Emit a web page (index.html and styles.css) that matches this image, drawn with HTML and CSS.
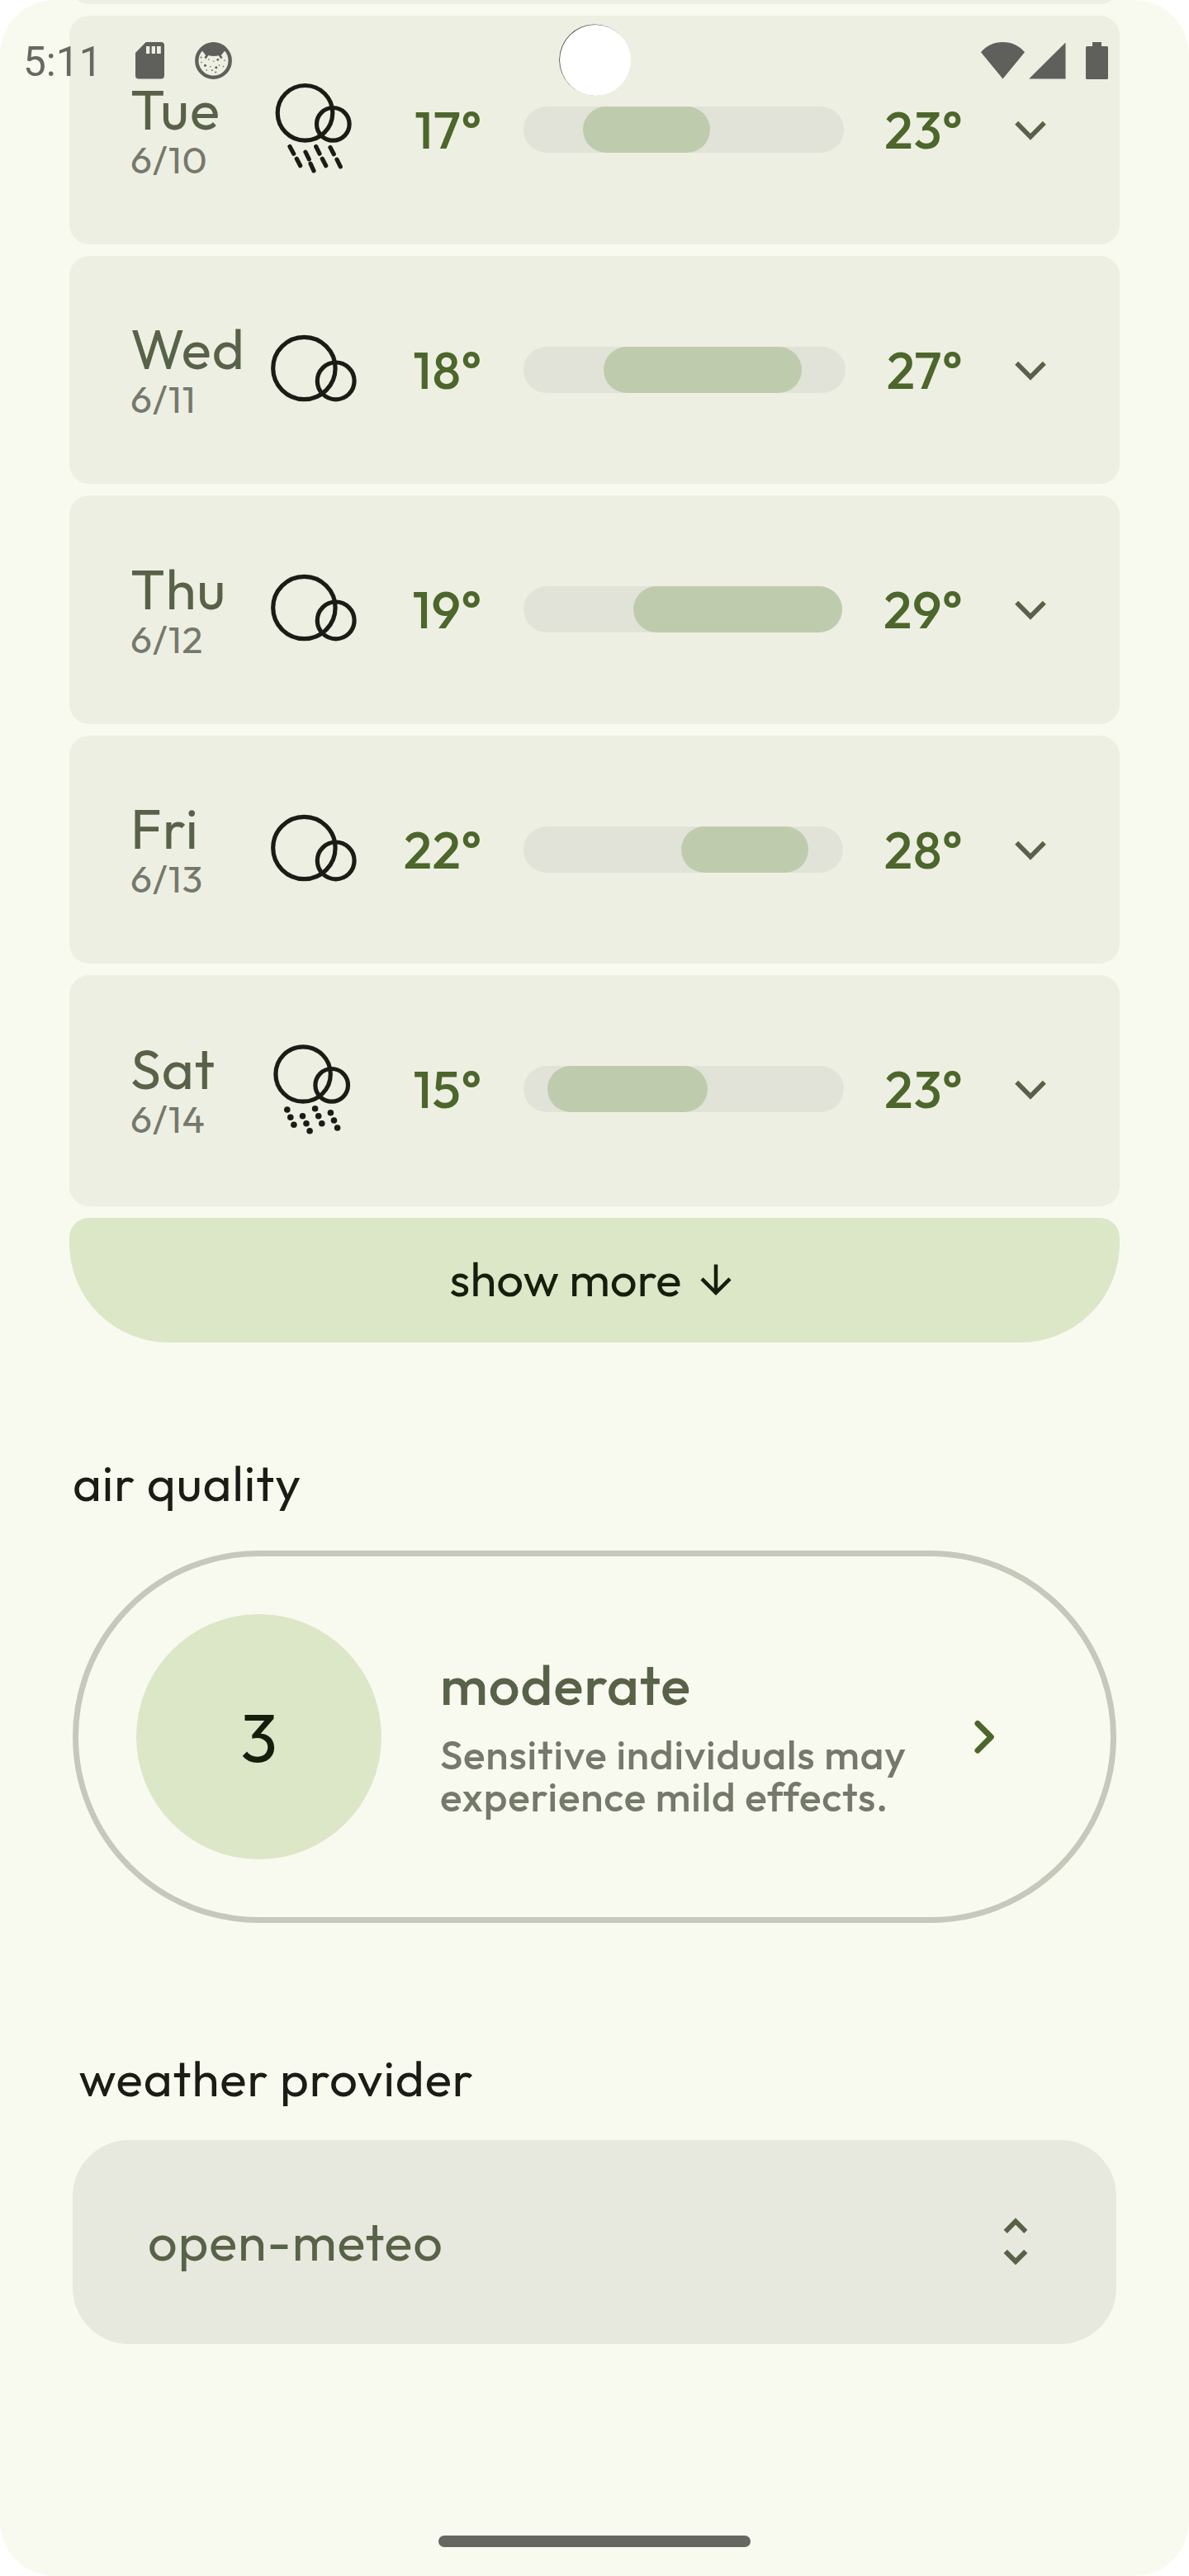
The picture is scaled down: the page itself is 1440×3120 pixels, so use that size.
FILE: index.html
```
<!DOCTYPE html>
<html lang="en">
<head>
<meta charset="utf-8">
<title>Weather</title>
<link rel="stylesheet" href="styles.css">
</head>
<body>
<div class="screen">
  <header class="status-bar">
    <div class="status-left">
      <span class="clock">5:11</span>
      <svg class="icon-sd" width="35" height="45" viewBox="0 0 35 45"><path fill-rule="evenodd" d="M12.700 0H31a4 4 0 0 1 4 4v36.500a4 4 0 0 1-4 4H4a4 4 0 0 1-4-4V13zM13 5v9h4.300V5zM19.700 5v9H24V5zM26 5v9h4.800V5z"/></svg>
      <svg class="icon-cat" width="45" height="45" viewBox="0 0 45 45">
        <circle cx="22.500" cy="22.500" r="20.200" fill="none" stroke="currentColor" stroke-width="4.400"/>
        <path d="M8.500 10C12 4.500 17 2 22.500 2S33 4.500 36.500 10L33 14.500Q28 17 22.500 17T12 14.500z"/>
        <path d="M13 13.500l1.800 2.500-2.300 3.500M32 13.500L30.200 16l2.300 3.500" fill="none" stroke="currentColor" stroke-width="2.600"/>
        <g><circle cx="12.500" cy="28.200" r="1.500"/><circle cx="27.800" cy="21.300" r="1.400"/><circle cx="25.800" cy="30.800" r="1.500"/><circle cx="7.500" cy="18.500" r=".9"/><circle cx="16.800" cy="21" r=".8"/><circle cx="8" cy="24.500" r=".8"/><circle cx="18.700" cy="29.800" r=".8"/><circle cx="22.800" cy="23.300" r=".7"/><circle cx="29.500" cy="28" r=".8"/><circle cx="34.500" cy="29.500" r=".8"/><circle cx="14.200" cy="34" r=".8"/><circle cx="20.800" cy="34.200" r=".9"/><circle cx="25.200" cy="36.500" r=".9"/><circle cx="36" cy="22.300" r=".8"/></g>
      </svg>
    </div>
    <div class="camera"></div>
    <div class="status-right">
      <svg class="icon-wifi" width="53" height="45" viewBox="0 0 53 45"><path d="M0 12.200C6.500 4.500 15.500 0 26.500 0S46.500 4.500 53 12.200L26.500 44.500z"/></svg>
      <svg class="icon-signal" width="45" height="45" viewBox="0 0 45 45"><path d="M44.500.5v44H.2z"/></svg>
      <svg class="icon-battery" width="27" height="45" viewBox="0 0 27 45"><path d="M8 0h11v5h6.500A1.500 1.500 0 0 1 27 6.500v37a1.500 1.500 0 0 1-1.500 1.500h-24A1.500 1.500 0 0 1 0 43.500v-37A1.500 1.500 0 0 1 1.500 5H8z"/></svg>
    </div>
  </header>

  <main class="content">
    <section class="forecast">
      <div class="day-row"></div>

      <div class="day-row">
        <div class="day"><span class="day-name">Tue</span><span class="day-date">6/10</span></div>
        <svg class="weather-icon" viewBox="0 0 120 120">
          <circle cx="47.500" cy="39.800" r="33.300"/><circle cx="81.300" cy="53.300" r="19.800"/>
          <path d="M29 80.500l4.700 8.700M37.300 95.200l4.400 8.600M48 87.200l4.300 8.600M54 101.200l4 8.600M60.700 80.500l4.300 8.700M68.300 95.200l4.400 8.600M78 81.500l4.300 8.300M86 96.200l4.300 8.600"/>
        </svg>
        <span class="temp temp-low">17°</span>
        <div class="track"><div class="range" style="margin-left:18.6%;width:39.8%"></div></div>
        <span class="temp">23°</span>
        <svg class="chevron" viewBox="0 0 48 48"><path d="M7.200 15.800l16.800 17 16.800-17"/></svg>
      </div>

      <div class="day-row">
        <div class="day"><span class="day-name">Wed</span><span class="day-date">6/11</span></div>
        <svg class="weather-icon" viewBox="0 0 120 120"><circle cx="46.400" cy="58" r="37.700"/><circle cx="84.700" cy="73.400" r="22.400"/></svg>
        <span class="temp temp-low">18°</span>
        <div class="track"><div class="range" style="margin-left:24.9%;width:61.5%"></div></div>
        <span class="temp">27°</span>
        <svg class="chevron" viewBox="0 0 48 48"><path d="M7.200 15.800l16.800 17 16.800-17"/></svg>
      </div>

      <div class="day-row">
        <div class="day"><span class="day-name">Thu</span><span class="day-date">6/12</span></div>
        <svg class="weather-icon" viewBox="0 0 120 120"><circle cx="46.400" cy="58" r="37.700"/><circle cx="84.700" cy="73.400" r="22.400"/></svg>
        <span class="temp temp-low">19°</span>
        <div class="track"><div class="range" style="margin-left:34.5%;width:65.5%"></div></div>
        <span class="temp">29°</span>
        <svg class="chevron" viewBox="0 0 48 48"><path d="M7.200 15.800l16.800 17 16.800-17"/></svg>
      </div>

      <div class="day-row">
        <div class="day"><span class="day-name">Fri</span><span class="day-date">6/13</span></div>
        <svg class="weather-icon" viewBox="0 0 120 120"><circle cx="46.400" cy="58" r="37.700"/><circle cx="84.700" cy="73.400" r="22.400"/></svg>
        <span class="temp temp-low">22°</span>
        <div class="track"><div class="range" style="margin-left:49.4%;width:39.7%"></div></div>
        <span class="temp">28°</span>
        <svg class="chevron" viewBox="0 0 48 48"><path d="M7.200 15.800l16.800 17 16.800-17"/></svg>
      </div>

      <div class="day-row day-row-last">
        <div class="day"><span class="day-name">Sat</span><span class="day-date">6/14</span></div>
        <svg class="weather-icon" viewBox="0 0 120 120">
          <circle cx="45.100" cy="42" r="33.200"/><circle cx="79.700" cy="55.300" r="19.800"/>
          <g class="drops"><circle cx="25.800" cy="85" r="3.800"/><circle cx="29.800" cy="94.300" r="3.800"/><circle cx="33.900" cy="103.300" r="3.800"/><circle cx="44.500" cy="92.700" r="3.800"/><circle cx="49" cy="101.700" r="3.800"/><circle cx="53.100" cy="110.700" r="3.800"/><circle cx="59.600" cy="83.700" r="3.800"/><circle cx="63.700" cy="92.700" r="3.800"/><circle cx="67.800" cy="101.700" r="3.800"/><circle cx="78.400" cy="88.700" r="3.800"/><circle cx="82.500" cy="98" r="3.800"/><circle cx="86.600" cy="107" r="3.800"/></g>
        </svg>
        <span class="temp temp-low">15°</span>
        <div class="track"><div class="range" style="margin-left:7.6%;width:50%"></div></div>
        <span class="temp">23°</span>
        <svg class="chevron" viewBox="0 0 48 48"><path d="M7.200 15.800l16.800 17 16.800-17"/></svg>
      </div>

      <button class="show-more"><span>show more</span>
        <svg width="56" height="56" viewBox="0 0 56 56"><path d="M28 8.500v34M11 25.800l17 17 17-17"/></svg>
      </button>
    </section>

    <h2 class="section-title">air quality</h2>
    <section class="air-card">
      <div class="air-index">3</div>
      <div class="air-text">
        <div class="air-level">moderate</div>
        <p class="air-note">Sensitive individuals may<br>experience mild effects.</p>
      </div>
      <svg class="air-arrow" viewBox="0 0 56 56"><path d="M18 11.500l16.300 16.300L18 44.100"/></svg>
    </section>

    <h2 class="section-title provider-title">weather provider</h2>
    <section class="provider">
      <span>open-meteo</span>
      <svg class="unfold" viewBox="0 0 64 64"><path d="M19.700 19.800L32 7.500l12.300 12.300M19.700 43.800L32 56.100l12.300-12.300"/></svg>
    </section>
  </main>
  <div class="home-bar"></div>
</div>
</body>
</html>
```
FILE: styles.css
```
:root {
  --surface: #f9faef;
  --card: #eeefe3;
  --card-high: #e8e9de;
  --card-highest: #e2e3d8;
  --primary: #4c662b;
  --secondary: #586249;
  --tonal: #dce7c8;
  --tonal-dim: #bfcbad;
  --on-tonal: #151e0b;
  --on-surface: #1a1c16;
  --outline: #75796c;
  --outline-soft: #c5c8ba;
  --system: #5f605b;
}

* { box-sizing: border-box; }

body {
  margin: 0;
  background: #fff;
  font-family: Outfit, Lato, sans-serif;
  font-weight: 400;
}

.screen {
  position: relative;
  width: 1440px;
  height: 3120px;
  overflow: hidden;
  background: var(--surface);
  border-radius: 66px;
}

/* System status bar, floating over the scrolled list */
.status-bar {
  position: absolute;
  inset: 0 0 auto 0;
  height: 146px;
  display: flex;
  align-items: center;
  justify-content: space-between;
  padding: 0 98px 0 28px;
  color: var(--system);
  z-index: 2;
}
.status-bar svg { fill: currentColor; display: block; }
.status-left, .status-right { display: flex; align-items: center; }
.clock {
  width: 136px;
  font: 400 49.500px/60px Roboto, sans-serif;
  color: #676863;
  padding-top: 3px;
}
.icon-cat { margin-left: 37px; }
.icon-wifi { margin-right: 4.500px; }
.icon-battery { margin-left: 24.500px; }
.camera {
  position: absolute;
  left: 678px;
  top: 29.500px;
  width: 86px;
  height: 86px;
  border-radius: 50%;
  background: #fff;
  box-shadow: -.8px -.4px 0 #444;
}

.content { padding: 0 88px; }

/* Daily forecast */
.forecast {
  display: flex;
  flex-direction: column;
  gap: 14px;
  margin: -271.500px -4px 0;
}
.day-row {
  display: flex;
  align-items: center;
  height: 276.500px;
  padding: 0 84.500px 0 74px;
  border-radius: 24px;
  background: var(--card);
}
.day-row-last { height: 280px; padding-bottom: 3.500px; }
.day {
  width: 164px;
  display: flex;
  flex-direction: column;
  margin-top: 5px;
}
.day-name {
  font-size: 67px;
  line-height: 67px;
  letter-spacing: 1px;
  color: var(--secondary);
}
.day-date {
  font-size: 46px;
  line-height: 55px;
  letter-spacing: .9px;
  color: var(--outline);
}
.weather-icon {
  width: 120px;
  height: 120px;
  flex: none;
  fill: none;
  stroke: var(--on-surface);
  stroke-width: 5.200;
  stroke-linecap: round;
}
.drops { fill: var(--on-surface); stroke: none; }
.temp {
  font-size: 63px;
  line-height: 80px;
  font-weight: 500;
  letter-spacing: .7px;
  color: var(--primary);
  white-space: nowrap;
}
.temp-low { width: 142px; text-align: right; }
.track {
  flex: 1;
  height: 56px;
  margin: 0 50px;
  border-radius: 28px;
  background: var(--card-highest);
}
.range {
  height: 56px;
  border-radius: 28px;
  background: var(--tonal-dim);
}
.chevron {
  width: 48px;
  height: 48px;
  flex: none;
  margin-left: 57px;
  fill: none;
  stroke: var(--secondary);
  stroke-width: 5.700;
}
.show-more {
  display: flex;
  align-items: center;
  justify-content: center;
  gap: 14px;
  height: 151px;
  padding: 0;
  border: 0;
  border-radius: 24px 24px 120px 120px;
  background: var(--tonal);
  color: var(--on-tonal);
  font: 400 58px/70px Outfit, Lato, sans-serif;
  letter-spacing: .1px;
}
.show-more svg {
  fill: none;
  stroke: currentColor;
  stroke-width: 4.500;
}
.show-more span { padding-bottom: 4px; }

.section-title {
  margin: 133px 0 45px;
  font-size: 60px;
  line-height: 74px;
  font-weight: 400;
  letter-spacing: .95px;
  color: var(--on-surface);
}
.provider-title { margin: 150.500px 0 38.100px; padding-left: 7.500px; }

/* Air quality */
.air-card {
  display: flex;
  align-items: center;
  height: 451px;
  padding: 0 123px 0 70px;
  border: 7px solid var(--outline-soft);
  border-radius: 226px;
}
.air-index {
  display: flex;
  align-items: center;
  justify-content: center;
  width: 297px;
  height: 297px;
  flex: none;
  border-radius: 50%;
  background: var(--tonal);
  color: var(--on-tonal);
  font-size: 83px;
  line-height: 100px;
}
.air-text { flex: 1; margin-left: 71px; }
.air-level {
  font-size: 67px;
  line-height: 69px;
  font-weight: 500;
  letter-spacing: 1.100px;
  color: var(--secondary);
}
.air-note {
  margin: 24px 0 0;
  font-size: 49.500px;
  line-height: 51.400px;
  font-weight: 500;
  letter-spacing: .85px;
  color: var(--outline);
  white-space: nowrap;
}
.air-arrow {
  width: 56px;
  height: 56px;
  flex: none;
  fill: none;
  stroke: var(--primary);
  stroke-width: 7;
  stroke-linecap: round;
  stroke-linejoin: round;
}

/* Provider picker */
.provider {
  display: flex;
  align-items: center;
  justify-content: space-between;
  height: 247.500px;
  padding: 0 90px 0 91px;
  border-radius: 68px;
  background: var(--card-high);
  color: var(--secondary);
  font-size: 63px;
  line-height: 78px;
  letter-spacing: 1px;
}
.unfold {
  width: 64px;
  height: 64px;
  fill: none;
  stroke: currentColor;
  stroke-width: 5.900;
}

.home-bar {
  position: absolute;
  left: 531px;
  bottom: 35px;
  width: 378px;
  height: 14px;
  border-radius: 7px;
  background: #666760;
}
```
